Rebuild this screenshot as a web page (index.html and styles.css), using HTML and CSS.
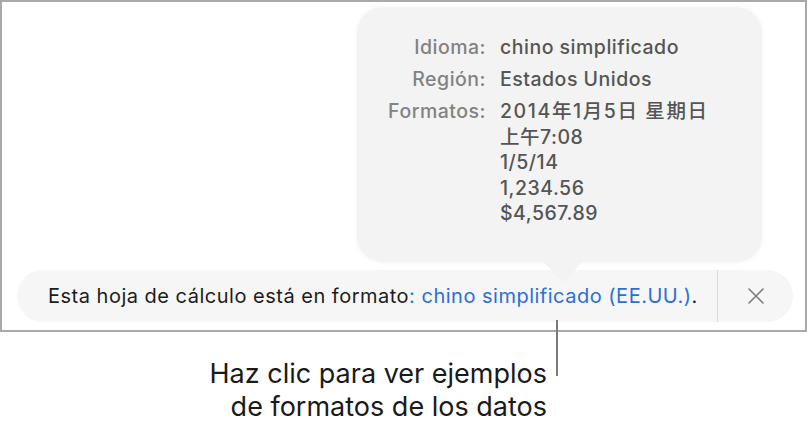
FILE: index.html
```html
<!DOCTYPE html>
<html lang="es">
<head>
<meta charset="utf-8">
<title>Formato de hoja de cálculo</title>
<link rel="stylesheet" href="styles.css">
</head>
<body>
<div class="frame">
  <div class="popover">
    <div class="info">
      <div class="label">Idioma:</div>
      <div class="value">chino simplificado</div>
      <div class="label">Región:</div>
      <div class="value">Estados Unidos</div>
      <div class="label">Formatos:</div>
      <div class="value"><span class="cjk">2014年1月5日 星期日</span><br>上午7:08<br>1/5/14<br>1,234.56<br>$4,567.89</div>
    </div>
    <svg class="arrow" width="40" height="22" viewBox="0 0 40 22"><path d="M0 0 L17 19 Q20 22 23 19 L40 0 Z" fill="#f3f3f3"/></svg>
  </div>
  <div class="banner">
    <div class="msg">Esta hoja de cálculo está en formato<span class="link">: chino simplificado (EE.UU.)</span>.</div>
    <div class="divider"></div>
    <div class="close">
      <svg width="16" height="16" viewBox="0 0 16 16"><path d="M1 1 L15 15 M15 1 L1 15" stroke="#7b7b7b" stroke-width="1.6" stroke-linecap="round" fill="none"/></svg>
    </div>
  </div>
  <div class="pointer"></div>
</div>
<div class="caption">Haz clic para ver ejemplos<br>de formatos de los datos</div>
</body>
</html>
```
FILE: styles.css
```css
html, body {
  margin: 0;
  padding: 0;
  background: #ffffff;
}
body {
  font-family: "Inter", "Noto Sans CJK SC", sans-serif;
  width: 809px;
  height: 434px;
  overflow: hidden;
}
.frame {
  position: relative;
  box-sizing: border-box;
  width: 807px;
  height: 332px;
  border: 2px solid #a9a9a9;
  display: flex;
  flex-direction: column;
  justify-content: flex-end;
  padding: 0 12px 8px 15px;
}
.popover {
  position: absolute;
  left: 355px;
  top: 5px;
  width: 405px;
  height: 255px;
  box-sizing: border-box;
  background: #f3f3f3;
  border-radius: 26px;
  box-shadow: 0 0 5px rgba(0, 0, 0, 0.05);
  padding: 28px 0 0 20px;
  z-index: 2;
}
.info {
  display: grid;
  grid-template-columns: 109px auto;
  column-gap: 14px;
  row-gap: 6.5px;
  font-size: 19.5px;
  line-height: 25.5px;
  letter-spacing: 0.5px;
  font-weight: 500;
}
.label {
  text-align: right;
  color: #828282;
}
.value {
  color: #555555;
}
.cjk {
  letter-spacing: 1.6px;
}
.arrow {
  position: absolute;
  left: 186px;
  top: 254px;
  display: block;
}
.banner {
  display: flex;
  align-items: stretch;
  height: 52px;
  background: #f6f6f6;
  border-radius: 26px;
  font-size: 20px;
  letter-spacing: 0.5px;
  color: #1c1c1c;
}
.msg {
  flex: 1;
  display: flex;
  align-items: center;
  padding-left: 31px;
  white-space: pre;
}
.link {
  color: #2a6fdb;
}
.divider {
  width: 1px;
  background: #d9d9d9;
}
.close {
  width: 75px;
  display: flex;
  align-items: center;
  justify-content: center;
}
.close svg {
  display: block;
}
.pointer {
  position: absolute;
  left: 554px;
  top: 318px;
  width: 2px;
  height: 56px;
  background: #7a7a7a;
  z-index: 3;
}
.caption {
  width: 547px;
  margin-top: 25px;
  text-align: right;
  font-size: 27px;
  line-height: 33px;
  color: #1a1a1a;
}
```
